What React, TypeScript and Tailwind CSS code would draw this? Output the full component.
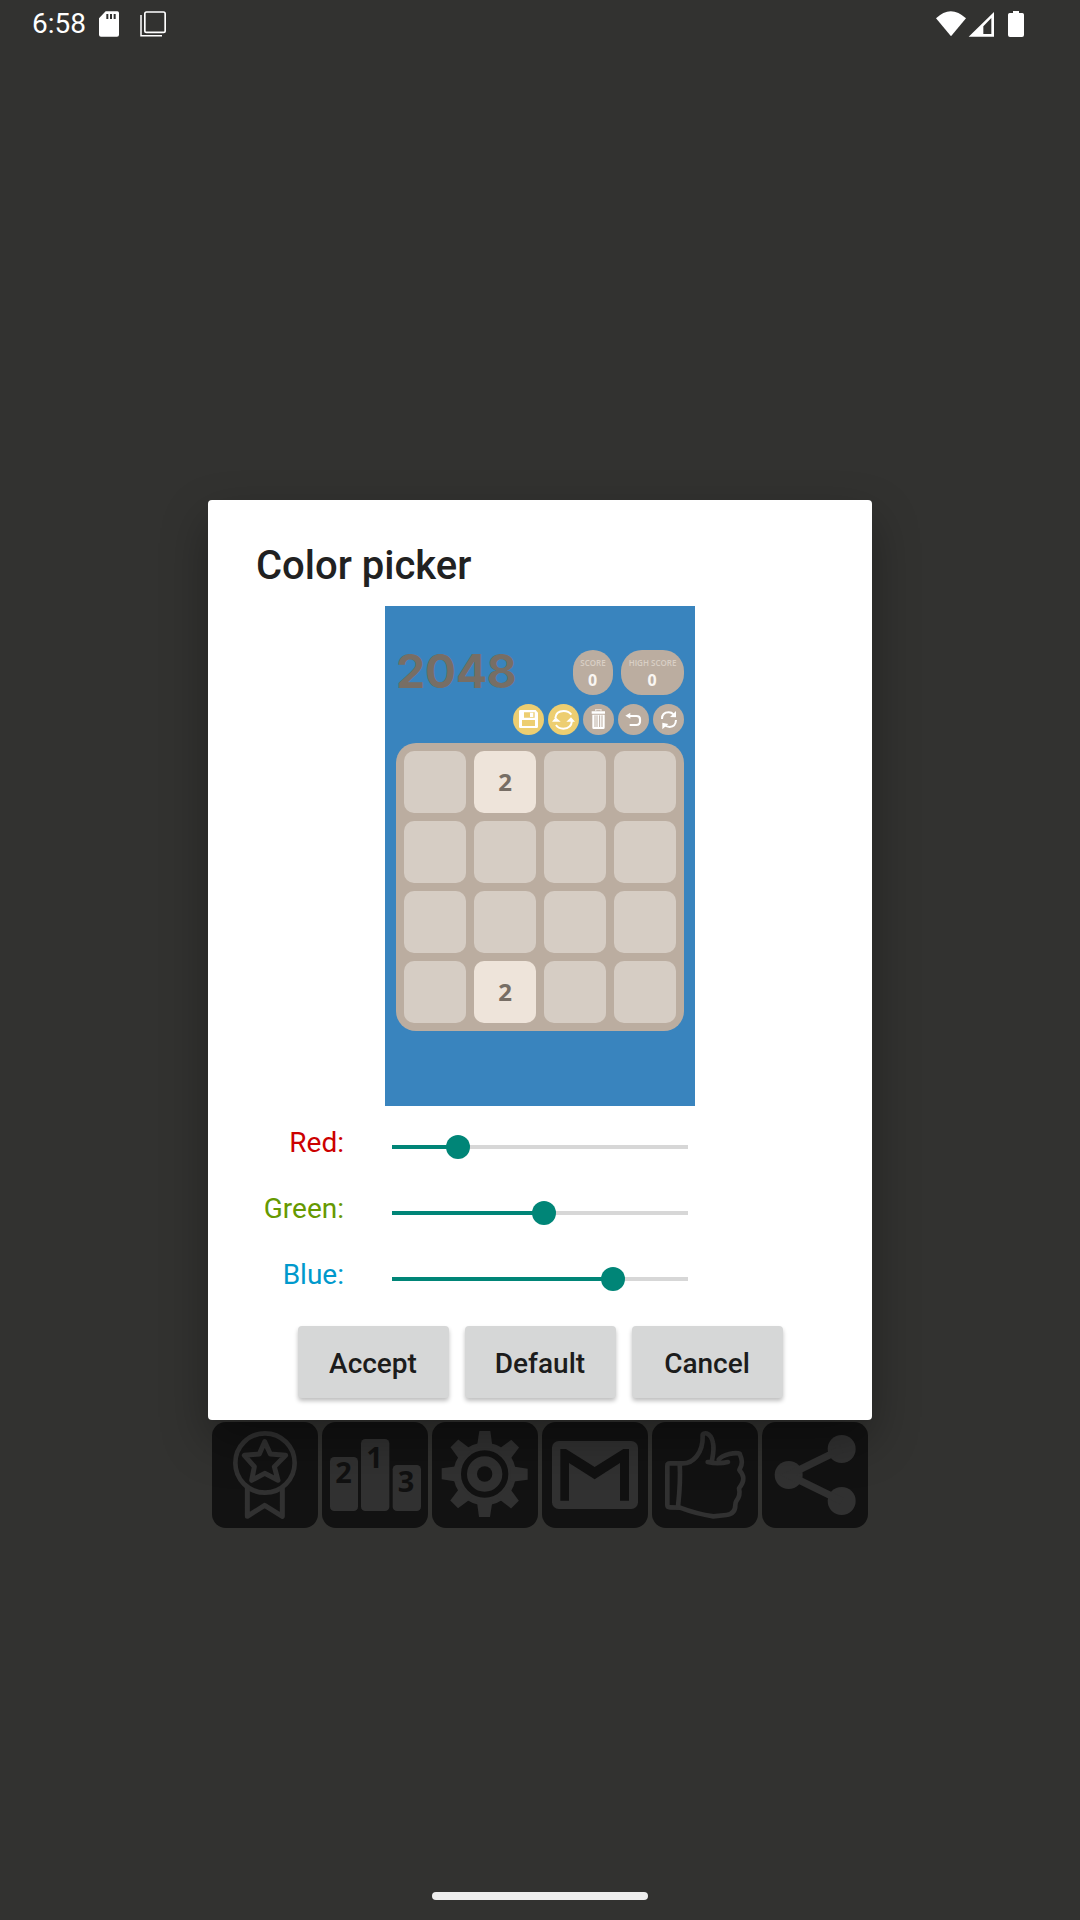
import type { ReactNode } from "react";

function StatusBar() {
  return (
    <div className="flex h-[50px] items-start text-white">
      <span className="ml-8 mt-[7px] w-[58px] text-[28px] leading-[33px]">6:58</span>
      <svg className="ml-[9px] mt-[11px] h-[26px] w-5" viewBox="297 33 60 78">
        <path
          d="M317 34h35q5 0 5 5v65q0 6-6 6h-48q-6 0-6-6V55zM319 42v15h6V42zm11 0v15h6V42zm11 0v15h6V42z"
          fill="#fff"
          fillRule="evenodd"
        />
      </svg>
      <svg className="ml-[21px] mt-[11px] h-[26px] w-[26px]" viewBox="420 33 78 78">
        <rect x="434.5" y="36" width="61" height="61" rx="5" fill="none" stroke="#fff" strokeWidth="5" />
        <path d="M423 45v62h63" fill="none" stroke="#fff" strokeWidth="4.5" />
      </svg>
      <svg className="ml-auto mr-[56px] mt-[11px] h-[26px] w-[88px]" viewBox="108 33 264 78">
        <path d="M108 55q44-43 90 0l-45 54z" fill="#fff" />
        <path d="M282 36v74h-76zm-8 18-24 25v23h24z" fill="#fff" fillRule="evenodd" />
        <path d="M339 33h18v6h10q5 0 5 5v61q0 6-6 6h-36q-6 0-6-6V44q0-5 5-5h10z" fill="#fff" />
      </svg>
    </div>
  );
}

const tools: { color: string; box: string; art: ReactNode }[] = [
  {
    color: "bg-[#edce71]",
    box: "39 222 93 93",
    art: (
      <>
        <path
          d="M61 240h46l7 8v42q0 4-4 4H61q-4 0-4-4v-46q0-4 4-4zm11 7v16h32v-16zM66 270v18h39v-18z"
          fill="#fff"
          fillRule="evenodd"
        />
        <path d="M90 248h10v13H90z" fill="#fff" />
      </>
    ),
  },
  {
    color: "bg-[#edce71]",
    box: "144 222 93 93",
    art: (
      <>
        <path d="M166 264q2-21 25-21 15 0 23 11M216 272q-2 24-26 24-15 0-22-11" fill="none" stroke="#fff" strokeWidth="6" />
        <path d="m156 275 11-13 15 13zM199 275l14-13 12 13z" fill="#fff" />
      </>
    ),
  },
  {
    color: "bg-[#bbada0]",
    box: "249 222 93 93",
    art: (
      <>
        <path d="M275 244h40v7h-40zM277 254h37v39q0 4-4 4h-29q-4 0-4-4z" fill="#fff" />
        <path d="M287 243v-4h16v4" fill="none" stroke="#e5ded8" strokeWidth="4" />
        <path d="M285 256v35M291 256v35M299 256v35M306 256v35" stroke="#bbada0" strokeWidth="3" />
      </>
    ),
  },
  {
    color: "bg-[#bbada0]",
    box: "354 222 93 93",
    art: (
      <>
        <path d="M388 258h21q11 0 11 10v6q0 11-11 11h-20" fill="none" stroke="#fff" strokeWidth="6.5" />
        <path d="m376 257 15-9v18z" fill="#fff" />
      </>
    ),
  },
  {
    color: "bg-[#bbada0]",
    box: "459 222 93 93",
    art: (
      <>
        <path d="M486 267q0-20 20-20 9 0 14 6M528 270q-1 20-19 21-10 0-16-7" fill="none" stroke="#fff" strokeWidth="6" />
        <path d="m510 261 18-18v19zM487 298v-20l18 4z" fill="#fff" />
      </>
    ),
  },
];

function Score({ label, width }: { label: string; width: string }) {
  return (
    <div className={`flex h-[45px] flex-col items-center rounded-[21px] bg-[#bbada0] pt-[8px] ${width}`}>
      <span className="whitespace-nowrap text-[8px] font-semibold leading-[9px] text-[#d9cfc5]">{label}</span>
      <span className="mr-px mt-[4px] text-[16px] font-bold leading-[18px] text-[#f9f6f2]">0</span>
    </div>
  );
}

function GamePreview() {
  const cells = Array.from({ length: 16 }, (_, i) => (i === 1 || i === 13 ? "2" : ""));
  return (
    <div className="mx-auto flex h-[500px] w-[310px] flex-col bg-[#3984be] px-[11px] pt-[44px] font-['Open_Sans',sans-serif]">
      <div className="flex h-[45px]">
        <span className="mt-[-8px] h-[45px] flex-1 font-[Inter,sans-serif] text-[46.5px] font-bold leading-[58px] tracking-[-0.5px] text-[#776e65]">
          2048
        </span>
        <div className="flex gap-2">
          <Score label="SCORE" width="w-10" />
          <Score label="HIGH SCORE" width="w-[63px]" />
        </div>
      </div>
      <div className="mt-[9px] flex justify-end gap-1">
        {tools.map((t, i) => (
          <div key={i} className={`size-[31px] rounded-full ${t.color}`}>
            <svg className="size-full" viewBox={t.box}>{t.art}</svg>
          </div>
        ))}
      </div>
      <div className="mt-2 grid h-[288px] grid-cols-4 gap-2 rounded-[20px] bg-[#bbada0] p-2">
        {cells.map((c, i) => (
          <div
            key={i}
            className={`flex size-[62px] items-center justify-center rounded-[10px] text-[24px] font-bold text-[#776e65] ${
              c ? "bg-[#eee4da]" : "bg-[#d6cdc4]"
            }`}
          >
            {c}
          </div>
        ))}
      </div>
    </div>
  );
}

function Slider({ label, color, value }: { label: string; color: string; value: number }) {
  return (
    <div className="flex h-[66px] items-center">
      <span className={`mt-[-9px] w-[136px] text-right text-[28px] leading-[33px] ${color}`}>{label}</span>
      <div className="relative ml-12 h-1 w-[296px] bg-[#d7d7d7]">
        <div className="h-1 bg-[#008577]" style={{ width: value }} />
        <div className="absolute top-[-10px] size-6 rounded-full bg-[#008577]" style={{ left: value - 12 }} />
      </div>
    </div>
  );
}

const ink = "#313131";
const hole = "#111111";

const tiles: { box: string; art: ReactNode }[] = [
  {
    box: "36 36 318 318",
    art: (
      <g fill="none" stroke={ink} strokeWidth="14" strokeLinejoin="round">
        <circle cx="195" cy="159" r="89" />
        <path d="m194 95 17 37 46 4-34 34 11 41-40-21-39 21 8-41-30-34 45-4z" strokeWidth="15" />
        <path d="M142 231v88l52-33 53 33v-88" strokeWidth="15" />
      </g>
    ),
  },
  {
    box: "366 36 318 318",
    art: (
      <>
        <g fill={ink}>
          <rect x="390" y="141" width="84" height="162" rx="13" />
          <rect x="483" y="87" width="85" height="216" rx="13" />
          <rect x="578" y="165" width="85" height="138" rx="13" />
        </g>
        <g fill={hole} fontFamily="Open Sans" fontWeight="700" fontSize="87" textAnchor="middle">
          <text x="431" y="220">2</text>
          <text x="524" y="173">1</text>
          <text x="618" y="245">3</text>
        </g>
      </>
    ),
  },
  {
    box: "36 36 318 318",
    art: (
      <>
        <g fill={ink}>
          <circle cx="194" cy="192" r="94" />
          {[0, 45, 90, 135, 180, 225, 270, 315].map((a) => (
            <path key={a} d="M178 63h33l7 52h-48z" transform={`rotate(${a} 194 192)`} />
          ))}
        </g>
        <circle cx="194" cy="192" r="62" fill="none" stroke={hole} strokeWidth="18" />
        <circle cx="194" cy="192" r="23" fill={hole} />
      </>
    ),
  },
  {
    box: "366 36 318 318",
    art: (
      <>
        <rect x="396" y="93" width="258" height="204" rx="20" fill={ink} />
        <path d="M421 272V117h17l86 54 86-54h17v155h-27V159l-76 49-77-49v113z" fill={hole} />
      </>
    ),
  },
  {
    box: "36 36 318 318",
    art: (
      <g fill="none" stroke={ink} strokeWidth="14" strokeLinecap="round" strokeLinejoin="round">
        <path d="M122 160H90q-8 0-8 7v118q0 7 8 7l30 1q50 19 100 26l39-4q27-3 27-30 0-7 3-12c12-14 11-25 8-38 20-25 14-40 1-55 11-19 9-29 1-49-12-5-51 2-63 18" />
        <path d="M122 160c38 4 68-33 66-84-1-9 24-13 31 23 4 18 0 35-3 52-3 7-9 5-13 5q30 7 61 0M119 160c3 44-1 93-5 130" />
      </g>
    ),
  },
  {
    box: "366 36 318 318",
    art: (
      <g fill={ink}>
        <circle cx="446" cy="195" r="42" />
        <circle cx="605" cy="117" r="42" />
        <circle cx="605" cy="273" r="42" />
        <path d="m605 117-159 78 159 78" fill="none" stroke={ink} strokeWidth="22" />
      </g>
    ),
  },
];

export default function App() {
  return (
    <div className="flex h-[1920px] w-[1080px] flex-col overflow-hidden bg-[#323230] font-[Roboto,sans-serif]">
      <StatusBar />
      <main className="relative z-10 mx-auto mt-[450px] h-[920px] w-[664px] rounded-[4px] bg-white shadow-[0_20px_48px_rgba(0,0,0,0.32)]">
        <h1 className="h-[106px] pl-12 pt-[42px] text-[40px] font-medium leading-[47px] text-[#212121]">Color picker</h1>
        <GamePreview />
        <div className="mt-2">
          <Slider label="Red:" color="text-[#cc0000]" value={66} />
          <Slider label="Green:" color="text-[#669900]" value={152} />
          <Slider label="Blue:" color="text-[#0099cc]" value={221} />
        </div>
        <div className="mt-[14px] flex justify-center gap-4">
          {["Accept", "Default", "Cancel"].map((b) => (
            <button
              key={b}
              className="h-[72px] w-[151px] rounded-[4px] bg-[#d6d7d7] pt-[3px] text-[28px] font-medium leading-[33px] text-[#1c1c1c] shadow-[0_3px_4px_rgba(0,0,0,0.25)]"
            >
              {b}
            </button>
          ))}
        </div>
      </main>
      <nav className="mx-auto mt-0.5 flex gap-1">
        {tiles.map((t, i) => (
          <div key={i} className="size-[106px] rounded-[14px] bg-[#121212]">
            <svg className="size-full" viewBox={t.box}>{t.art}</svg>
          </div>
        ))}
      </nav>
      <div className="mx-auto mb-5 mt-auto h-2 w-[216px] rounded-full bg-[#eeeeee]" />
    </div>
  );
}
